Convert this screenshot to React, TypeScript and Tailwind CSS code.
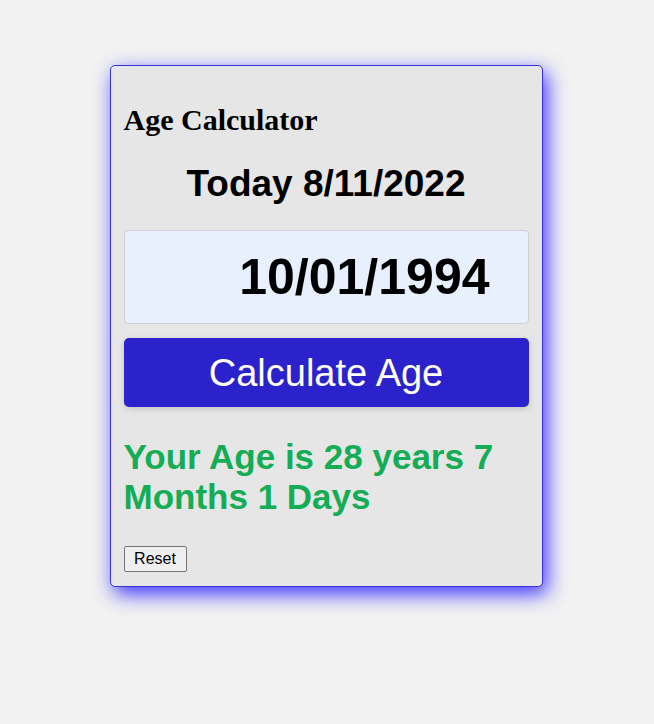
import React from 'react';

export default function App() {
  return (
    <div className="min-h-[724px] w-full bg-[#f2f2f2] pt-[65px]">
      <div className="mx-auto w-[433px] -translate-x-[1px] rounded-[5px] border border-[#3b30d6] bg-[#e6e6e6] px-[13px] pb-[14px] pt-[37px] shadow-[4px_7px_20px_rgba(30,20,255,0.85)]">
        {/* Title */}
        <h1 className="font-['Liberation_Serif',serif] text-[30px] font-bold leading-[34.5px] text-black">
          Age Calculator
        </h1>

        {/* Today's date */}
        <h2 className="mt-[25px] text-center font-['Liberation_Sans',Arial,sans-serif] text-[37px] font-bold leading-[41px] text-black">
          Today 8/11/2022
        </h2>

        {/* Birth date field */}
        <div className="mt-[26px] flex h-[94px] items-center justify-end rounded-[4px] border border-[#cfcfd4] bg-[#e8f0fe] pr-[38px]">
          <span className="font-['Liberation_Sans',Arial,sans-serif] text-[50px] font-bold leading-none text-black">
            10/01/1994
          </span>
        </div>

        {/* Action */}
        <button className="mt-[14px] flex h-[69px] w-full items-center justify-center rounded-[5px] bg-[#2c22cc] pt-[3px] font-['Liberation_Sans',Arial,sans-serif] text-[38px] text-white shadow-[0_2px_6px_rgba(0,0,0,0.15)]">
          Calculate Age
        </button>

        {/* Result */}
        <p className="mt-[30px] font-['Liberation_Sans',Arial,sans-serif] text-[35px] font-bold leading-[40.5px] text-[#14ad55]">
          Your Age is 28 years 7 Months 1 Days
        </p>

        <button className="mt-[28px] h-[26px] w-[63px] rounded-[2px] border border-[#767676] bg-[#efefef] font-['Liberation_Sans',Arial,sans-serif] text-[16px] text-black">
          Reset
        </button>
      </div>
    </div>
  );
}
